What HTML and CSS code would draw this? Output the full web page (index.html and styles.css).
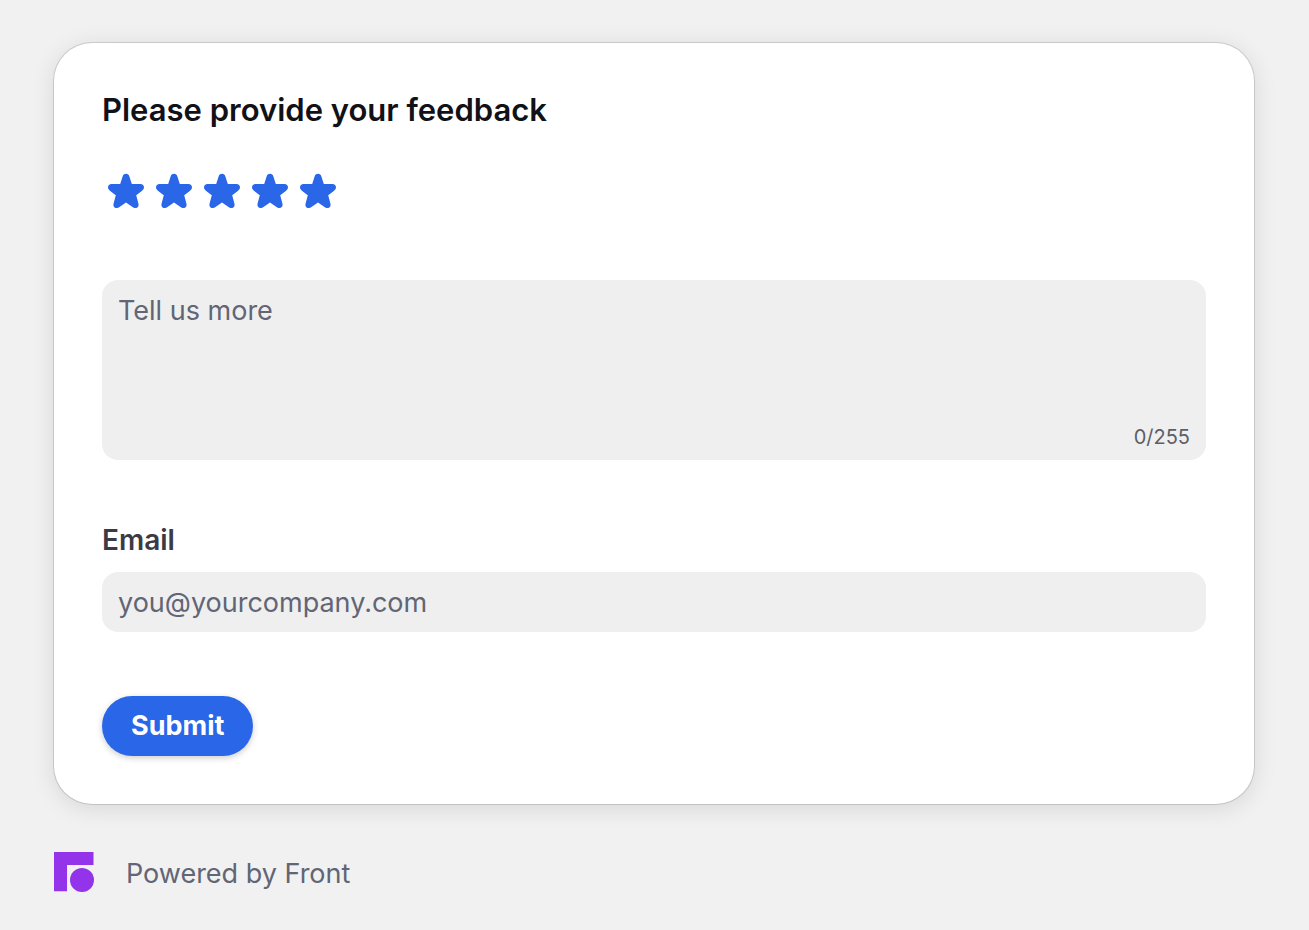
FILE: index.html
```html
<!DOCTYPE html>
<html lang="en">
<head>
<meta charset="utf-8">
<meta name="viewport" content="width=device-width, initial-scale=1">
<title>Feedback</title>
<link rel="stylesheet" href="styles.css">
</head>
<body>
<svg class="defs" aria-hidden="true">
  <symbol id="star" viewBox="0 0 36 36">
    <path d="M18 .7C16.200 .7 15.100 1.700 14.600 3.400L12.200 11H3.600C1.400 11 0 12.400 0 14.300C0 15.800 .8 16.900 2.200 17.900L7.800 22.200L5.600 30.500C4.900 33 6.300 35.100 8.500 35.100C9.700 35.100 10.500 34.700 11.500 34L18 29.600L24.500 34C25.500 34.700 26.300 35.100 27.500 35.100C29.700 35.100 31.100 33 30.400 30.500L28.200 22.200L33.800 17.900C35.200 16.900 36 15.800 36 14.300C36 12.400 34.600 11 32.400 11H23.800L21.400 3.400C20.900 1.700 19.800 .7 18 .7Z"/>
  </symbol>
</svg>
<main class="page">
  <form class="card">
    <h1 class="title" id="title">Please provide your feedback</h1>
    <div class="stars" role="group" aria-labelledby="title">
      <button class="star" type="button" aria-label="1 star"><svg><use href="#star"/></svg></button>
      <button class="star" type="button" aria-label="2 stars"><svg><use href="#star"/></svg></button>
      <button class="star" type="button" aria-label="3 stars"><svg><use href="#star"/></svg></button>
      <button class="star" type="button" aria-label="4 stars"><svg><use href="#star"/></svg></button>
      <button class="star" type="button" aria-label="5 stars"><svg><use href="#star"/></svg></button>
    </div>
    <div class="comment">
      <textarea class="comment-input" maxlength="255" placeholder="Tell us more" aria-label="Tell us more"></textarea>
      <span class="counter">0/255</span>
    </div>
    <div class="field">
      <label class="label" for="email">Email</label>
      <input class="input" id="email" type="email" placeholder="you@yourcompany.com">
    </div>
    <button class="submit" type="submit">Submit</button>
  </form>
  <footer class="footer">
    <svg class="logo" viewBox="0 0 40 40" aria-hidden="true">
      <path d="M0 0H39.500V13H13V39.300H0Z"/>
      <circle cx="28" cy="28" r="12"/>
    </svg>
    <span>Powered by Front</span>
  </footer>
</main>
</body>
</html>
```
FILE: styles.css
```css
* {
  box-sizing: border-box;
}

body {
  margin: 0;
  background: #f1f1f1;
  color: #616575;
  font-family: Inter, "Liberation Sans", sans-serif;
  font-size: 27px;
  line-height: 36px;
}

button,
input,
textarea {
  margin: 0;
  border: 0;
  font: inherit;
}

.defs {
  position: absolute;
  width: 0;
  height: 0;
}

.page {
  padding: 43px 55px 36px 54px;
}

.card {
  display: flex;
  flex-direction: column;
  align-items: flex-start;
  padding: 48px;
  border-radius: 38px;
  background: #fff;
  box-shadow: 0 0 0 1px rgba(0, 0, 0, 0.13), 0 4px 24px rgba(0, 0, 0, 0.11);
}

.title {
  margin: 0 0 40px;
  color: #111118;
  font-size: 31px;
  font-weight: 600;
  line-height: 38px;
}

.stars {
  display: flex;
  margin-bottom: 68px;
}

.star {
  display: grid;
  place-items: center;
  width: 48px;
  height: 43px;
  padding: 0;
  background: none;
  cursor: pointer;
}

.star svg {
  width: 36px;
  height: 36px;
  fill: #2966e8;
}

.comment {
  display: flex;
  flex-direction: column;
  width: 100%;
  height: 180px;
  padding: 12px 16px 8px;
  margin-bottom: 62px;
  border-radius: 16px;
  background: #efefef;
}

.comment-input {
  flex: 1;
  width: 100%;
  padding: 0;
  background: transparent;
  line-height: 38px;
  outline: 0;
  resize: none;
}

.comment-input::placeholder,
.input::placeholder {
  color: #616575;
  opacity: 1;
}

.counter {
  align-self: flex-end;
  color: #5b5f69;
  font-size: 20px;
  line-height: 30px;
}

.field {
  display: flex;
  flex-direction: column;
  gap: 14px;
  width: 100%;
  margin-bottom: 64px;
}

.label {
  color: #3b3a45;
  font-size: 28px;
  font-weight: 600;
  line-height: 36px;
}

.input {
  width: 100%;
  height: 60px;
  padding: 0 16px;
  border-radius: 16px;
  background: #efefef;
}

.submit {
  height: 60px;
  padding: 0 29px;
  border-radius: 30px;
  background: #2966e8;
  color: #fff;
  font-weight: 700;
  box-shadow: 0 2px 6px rgba(0, 0, 0, 0.2);
  cursor: pointer;
}

.footer {
  display: flex;
  align-items: flex-end;
  gap: 32px;
  margin-top: 48px;
}

.logo {
  width: 40px;
  height: 40px;
  fill: #9333ea;
}
```
